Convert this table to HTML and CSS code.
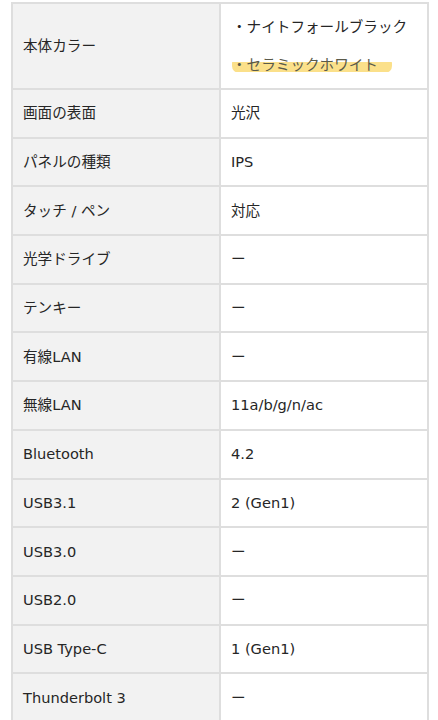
FILE: index.html
```html
<!DOCTYPE html>
<html lang="ja">
<head>
<meta charset="utf-8">
<link rel="stylesheet" href="styles.css">
</head>
<body>
<div class="wrap">
  <div class="spec">
    <div class="th">本体カラー</div>
    <div class="td multi">
      <div class="line">・ナイトフォールブラック</div>
      <div class="line"><span class="mark">・セラミックホワイト</span></div>
    </div>
    <div class="th">画面の表面</div><div class="td">光沢</div>
    <div class="th">パネルの種類</div><div class="td">IPS</div>
    <div class="th">タッチ / ペン</div><div class="td">対応</div>
    <div class="th">光学ドライブ</div><div class="td">ー</div>
    <div class="th">テンキー</div><div class="td">ー</div>
    <div class="th">有線LAN</div><div class="td">ー</div>
    <div class="th">無線LAN</div><div class="td">11a/b/g/n/ac</div>
    <div class="th">Bluetooth</div><div class="td">4.2</div>
    <div class="th">USB3.1</div><div class="td">2 (Gen1)</div>
    <div class="th">USB3.0</div><div class="td">ー</div>
    <div class="th">USB2.0</div><div class="td">ー</div>
    <div class="th">USB Type-C</div><div class="td">1 (Gen1)</div>
    <div class="th">Thunderbolt 3</div><div class="td">ー</div>
  </div>
</div>
</body>
</html>
```
FILE: styles.css
```css
html, body {
  margin: 0;
  padding: 0;
  background: #fff;
}
.wrap {
  padding: 2px 9px 0 11px;
}
.spec {
  display: grid;
  grid-template-columns: 1fr 1fr;
  grid-template-rows: 86px;
  grid-auto-rows: 48.7px;
  border-top: 2px solid #dedede;
  border-left: 2px solid #dedede;
  font-family: "DejaVu Sans", "Noto Sans CJK JP", sans-serif;
  font-size: 14.6px;
  color: #262626;
}
.th, .td {
  display: flex;
  flex-direction: column;
  justify-content: center;
  padding: 0 10px;
  border-right: 2px solid #dedede;
  border-bottom: 2px solid #dedede;
  box-sizing: border-box;
  line-height: 20px;
  font-family: "DejaVu Sans", "Noto Sans CJK JP", sans-serif;
}
.th {
  background: #f2f2f2;
}
.td {
  background: #fff;
}
.multi {
  gap: 18px;
}
.line {
  padding-left: 1px;
}
.mark {
  color: #5a5a4a;
  background: linear-gradient(transparent 38%, #fbe08a 38%, #fbe08a 96%, transparent 96%);
  border-radius: 7px;
  padding: 0 14px 0 0;
}
```
